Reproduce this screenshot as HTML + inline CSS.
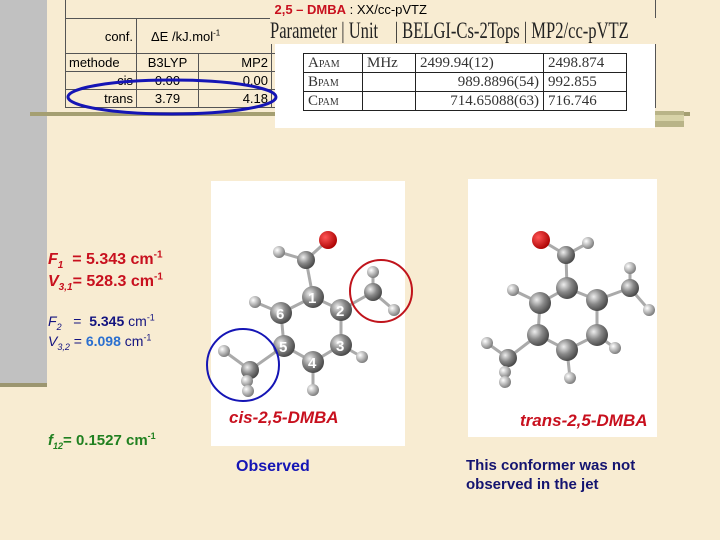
<!DOCTYPE html>
<html><head><style>
body{margin:0;width:720px;height:540px;overflow:hidden;background:#f8ecd2;position:relative;font-family:"Liberation Sans",sans-serif}
.a{position:absolute;white-space:nowrap}
table{border-collapse:collapse}
#t1 td{border:1px solid #555;font-size:13px;padding:0 3px;height:17px;text-align:right}
#t2 td{border:1px solid #222;font-family:"Liberation Serif",serif;font-size:15px;color:#333;height:18px;padding:0 4px}
.sub{font-size:10px}
sub,sup{line-height:0}
</style></head><body>
<div class="a" style="left:0;top:0;width:47px;height:383px;background:#c1c1c1"></div>
<div class="a" style="left:0;top:383px;width:47px;height:4px;background:#9c9670"></div>
<div class="a" style="left:30px;top:112px;width:660px;height:4px;background:#a59f72"></div>
<div class="a" style="left:655px;top:111px;width:29px;height:16px;background:#b9b488"></div>
<div class="a" style="left:655px;top:115px;width:29px;height:6px;background:#d8d3a8"></div>

<table id="t1" class="a" style="left:65px;top:-1px;width:591px">
<tr><td colspan="3" style="height:18px;border-right:none"></td><td colspan="2" style="text-align:left;border-left:none;font-size:13px"><b style="color:#c8101e;font-family:'Liberation Sans'">2,5 – DMBA</b> : XX/cc-pVTZ</td></tr>
<tr><td style="width:64px;height:34px">conf.</td><td colspan="2" style="text-align:left;padding-left:14px">ΔE /kJ.mol<sup style="font-size:8px">-1</sup></td><td colspan="2"></td></tr>
<tr><td style="text-align:left">methode</td><td style="width:55px;text-align:center">B3LYP</td><td style="width:66px">MP2</td><td colspan="2"></td></tr>
<tr><td>cis</td><td style="text-align:center">0.00</td><td>0.00</td><td colspan="2"></td></tr>
<tr><td>trans</td><td style="text-align:center">3.79</td><td>4.18</td><td colspan="2"></td></tr>
</table>

<div class="a" style="left:275px;top:22px;width:380px;height:106px;background:#fff"></div>
<div class="a" style="left:270px;top:18px;height:26px;font-family:'Liberation Serif',serif;font-size:23px;color:#222;transform:scaleX(0.72);transform-origin:0 0;background:#f8ecd2;width:540px">Parameter | Unit &nbsp;&nbsp;&nbsp;| BELGI-Cs-2Tops | MP2/cc-pVTZ</div>
<table id="t2" class="a" style="left:303px;top:53px">
<tr><td style="width:50px">A<span class="sub">PAM</span></td><td style="width:44px">MHz</td><td style="width:119px">2499.94(12)</td><td style="width:74px">2498.874</td></tr>
<tr><td>B<span class="sub">PAM</span></td><td></td><td style="text-align:right">989.8896(54)</td><td>992.855</td></tr>
<tr><td>C<span class="sub">PAM</span></td><td></td><td style="text-align:right">714.65088(63)</td><td>716.746</td></tr>
</table>
<svg class="a" style="left:0;top:0" width="720" height="540"><ellipse cx="172" cy="97" rx="104" ry="17" fill="none" stroke="#1515b5" stroke-width="3"/></svg>

<div class="a" style="left:211px;top:181px;width:194px;height:265px;background:#fff"></div>
<div class="a" style="left:468px;top:179px;width:189px;height:258px;background:#fff"></div>

<svg class="a" style="left:0;top:0" width="720" height="540">
<defs>
<radialGradient id="g" cx="35%" cy="35%" r="70%"><stop offset="0" stop-color="#eee"/><stop offset=".5" stop-color="#888"/><stop offset="1" stop-color="#444"/></radialGradient>
<radialGradient id="h" cx="35%" cy="35%" r="70%"><stop offset="0" stop-color="#fff"/><stop offset="1" stop-color="#777"/></radialGradient>
<radialGradient id="r" cx="35%" cy="35%" r="70%"><stop offset="0" stop-color="#f55"/><stop offset="1" stop-color="#a00"/></radialGradient>
</defs>
<g stroke="#aaa" stroke-width="3" fill="none">
<path d="M328 240L306 260L279 252M306 260L313 297L341 310L341 345L313 362L284 346L281 313L313 297M281 313L255 302M341 310L373 292L373 272M373 292L394 310M284 346L250 370L224 351M250 370L247 388M341 345L362 357M313 362L313 390"/>
<path d="M541 240L566 255L588 243M566 255L567 288L597 300L597 335L567 350L538 335L540 303L567 288M540 303L513 290M597 300L630 288L630 268M630 288L649 310M538 335L508 358L487 343M508 358L505 378M597 335L615 348M567 350L570 378"/>
</g>
<g fill="url(#g)">
<circle cx="306" cy="260" r="9"/><circle cx="313" cy="297" r="11"/><circle cx="341" cy="310" r="11"/><circle cx="341" cy="345" r="11"/><circle cx="313" cy="362" r="11"/><circle cx="284" cy="346" r="11"/><circle cx="281" cy="313" r="11"/><circle cx="373" cy="292" r="9"/><circle cx="250" cy="370" r="9"/>
<circle cx="566" cy="255" r="9"/><circle cx="567" cy="288" r="11"/><circle cx="597" cy="300" r="11"/><circle cx="597" cy="335" r="11"/><circle cx="567" cy="350" r="11"/><circle cx="538" cy="335" r="11"/><circle cx="540" cy="303" r="11"/><circle cx="630" cy="288" r="9"/><circle cx="508" cy="358" r="9"/>
</g>
<g fill="url(#h)">
<circle cx="279" cy="252" r="6"/><circle cx="255" cy="302" r="6"/><circle cx="373" cy="272" r="6"/><circle cx="394" cy="310" r="6"/><circle cx="224" cy="351" r="6"/><circle cx="247" cy="381" r="6"/><circle cx="248" cy="391" r="6"/><circle cx="362" cy="357" r="6"/><circle cx="313" cy="390" r="6"/>
<circle cx="588" cy="243" r="6"/><circle cx="513" cy="290" r="6"/><circle cx="630" cy="268" r="6"/><circle cx="649" cy="310" r="6"/><circle cx="487" cy="343" r="6"/><circle cx="505" cy="372" r="6"/><circle cx="505" cy="382" r="6"/><circle cx="615" cy="348" r="6"/><circle cx="570" cy="378" r="6"/>
</g>
<circle cx="328" cy="240" r="9" fill="url(#r)"/><circle cx="541" cy="240" r="9" fill="url(#r)"/>
<g fill="#fff" font-weight="bold" font-size="15" font-family="Liberation Sans">
<text x="308" y="303">1</text><text x="336" y="316">2</text><text x="336" y="351">3</text><text x="308" y="368">4</text><text x="279" y="352">5</text><text x="276" y="319">6</text></g>
<circle cx="381" cy="291" r="31" fill="none" stroke="#c0141c" stroke-width="2"/>
<circle cx="243" cy="365" r="36" fill="none" stroke="#1515b5" stroke-width="2"/>
</svg>

<div class="a" style="left:229px;top:408px;color:#c8101e;font:italic bold 17px 'Liberation Sans',sans-serif">cis-2,5-DMBA</div>
<div class="a" style="left:520px;top:411px;color:#c8101e;font:italic bold 17px 'Liberation Sans',sans-serif">trans-2,5-DMBA</div>

<div class="a" style="left:48px;top:251px;color:#c8101e;font:bold 16px 'Liberation Sans',sans-serif"><i>F<sub style="font-size:10px">1</sub></i>&nbsp; = 5.343 cm<sup style="font-size:10px">-1</sup></div>
<div class="a" style="left:48px;top:273px;color:#c8101e;font:bold 16px 'Liberation Sans',sans-serif"><i>V<sub style="font-size:10px">3,1</sub></i>= 528.3 cm<sup style="font-size:10px">-1</sup></div>
<div class="a" style="left:48px;top:313px;color:#141480;font:14px 'Liberation Sans',sans-serif"><i>F<sub style="font-size:9px">2</sub></i> &nbsp; = &nbsp;<b>5.345</b> cm<sup style="font-size:9px">-1</sup></div>
<div class="a" style="left:48px;top:333px;color:#141480;font:14px 'Liberation Sans',sans-serif"><i>V<sub style="font-size:9px">3,2</sub></i> = <b style="color:#2a6fd0">6.098</b> cm<sup style="font-size:9px">-1</sup></div>
<div class="a" style="left:48px;top:432px;color:#208020;font:bold 15px 'Liberation Sans',sans-serif"><i>f<sub style="font-size:9px">12</sub></i>= 0.1527 cm<sup style="font-size:9px">-1</sup></div>

<div class="a" style="left:236px;top:458px;color:#1515b5;font:bold 16px 'Liberation Sans',sans-serif">Observed</div>
<div class="a" style="left:466px;top:456px;color:#141470;font:bold 15px 'Liberation Sans',sans-serif;line-height:19px">This conformer was not<br>observed in the jet</div>
</body></html>
